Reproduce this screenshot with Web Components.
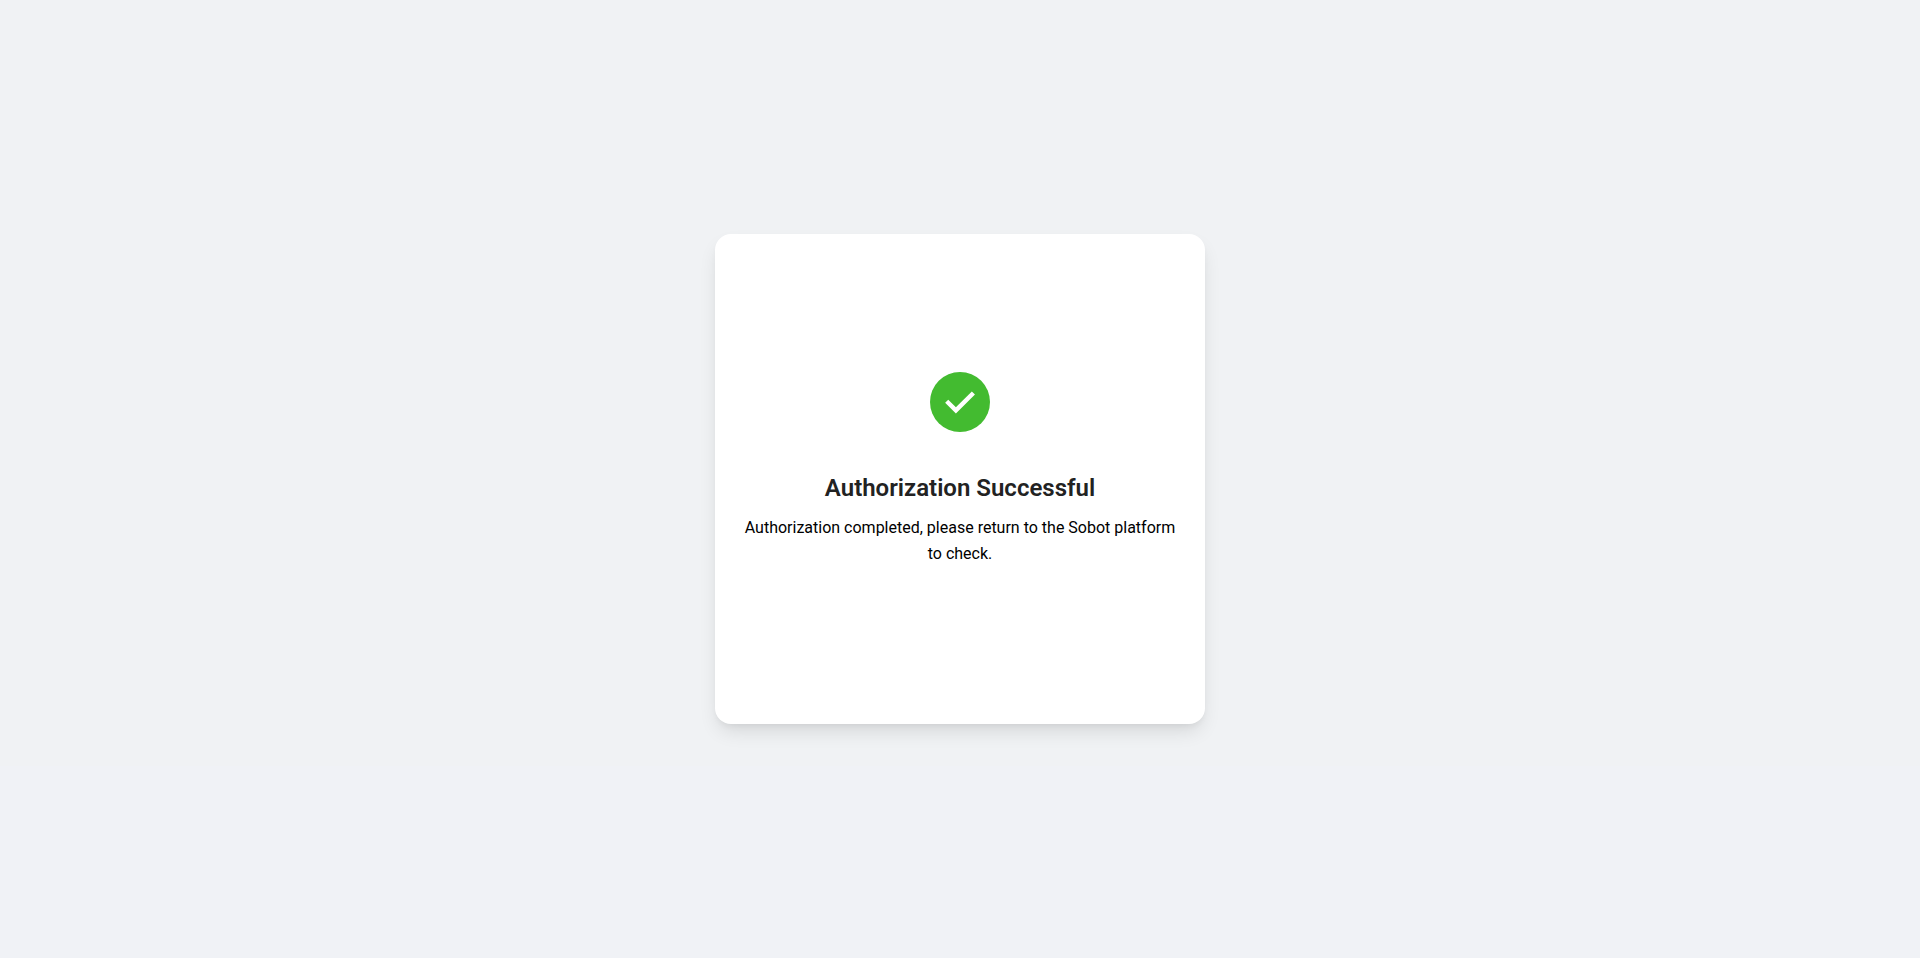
<!DOCTYPE html>
<html lang="en">
<head>
<meta charset="utf-8">
<meta name="viewport" content="width=device-width, initial-scale=1">
<title>Authorization Successful</title>
<style>
body { margin: 0; font-family: Roboto, "Liberation Sans", sans-serif; }
</style>
</head>
<body>
<auth-page>
  <result-card>
    <success-icon slot="icon"></success-icon>
    <span slot="title">Authorization Successful</span>
    <span slot="message">Authorization completed, please return to the Sobot platform to check.</span>
  </result-card>
</auth-page>
<script>
class AuthPage extends HTMLElement {
  constructor() {
    super();
    this.attachShadow({ mode: "open" }).innerHTML = `
      <style>
        :host { display: block; }
        main { display: flex; align-items: center; justify-content: center; min-height: 100vh;
          background: linear-gradient(#f0f2f4 80%, #f0f2f6 80%); }
      </style>
      <main><slot></slot></main>`;
  }
}
class ResultCard extends HTMLElement {
  constructor() {
    super();
    this.attachShadow({ mode: "open" }).innerHTML = `
      <style>
        :host { display: flex; flex-direction: column; align-items: center; justify-content: center;
          box-sizing: border-box; width: 100%; max-width: 490px; min-height: 490px; padding: 24px;
          background: #fff; border-radius: 16px; text-align: center;
          box-shadow: 0 10px 20px -4px rgba(0,0,0,.12), 0 4px 6px -2px rgba(0,0,0,.05); }
        h1 { margin: 36px 0 7px; font-size: 24px; line-height: 40px; font-weight: 600; color: #222; }
        p { margin: 0 0 19px; font-size: 16px; line-height: 26px; color: #000; }
      </style>
      <slot name="icon"></slot>
      <h1><slot name="title"></slot></h1>
      <p><slot name="message"></slot></p>`;
  }
}
class SuccessIcon extends HTMLElement {
  constructor() {
    super();
    this.attachShadow({ mode: "open" }).innerHTML = `
      <style>
        :host { display: block; }
        svg { display: block; width: 60px; height: 60px; }
      </style>
      <svg viewBox="0 0 60 60" aria-hidden="true">
        <circle cx="30" cy="30" r="30" fill="#43bb30"/>
        <path d="M16.7 29.2L25.9 38.3L43.4 21" fill="none" stroke="#fff" stroke-width="4.4"/>
      </svg>`;
  }
}
customElements.define("auth-page", AuthPage);
customElements.define("result-card", ResultCard);
customElements.define("success-icon", SuccessIcon);
</script>
</body>
</html>
